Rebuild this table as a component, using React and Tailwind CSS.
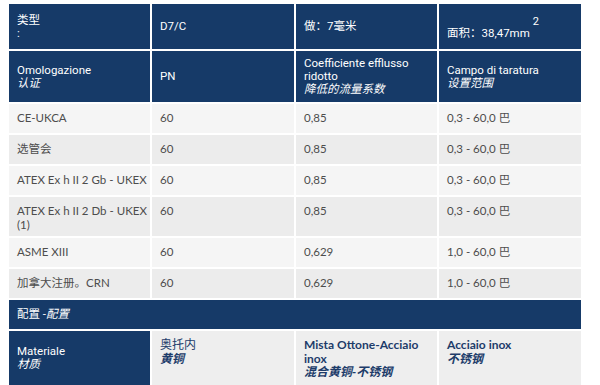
export default function App() {
  const dark = "bg-[#163a68] text-white font-['Roboto','Noto_Sans_CJK_SC',sans-serif] text-[11.5px] leading-[13px] px-[8px] flex flex-col justify-center";
  const dataFont = "font-['Lato','Noto_Sans_CJK_SC',sans-serif] text-[11.5px] leading-[14px] text-[#4d4d4d]";
  const rows = [
    { a: "CE-UKCA", b: "60", c: "0,85", d: "0,3 - 60,0 巴", h: "h-[29px]", bg: "bg-[#f5f5f5]" },
    { a: "选管会", b: "60", c: "0,85", d: "0,3 - 60,0 巴", h: "h-[29px]", bg: "bg-[#ececec]" },
    { a: "ATEX Ex h II 2 Gb - UKEX", b: "60", c: "0,85", d: "0,3 - 60,0 巴", h: "h-[29px]", bg: "bg-[#f5f5f5]" },
    { a: "ATEX Ex h II 2 Db - UKEX (1)", b: "60", c: "0,85", d: "0,3 - 60,0 巴", h: "h-[39px]", bg: "bg-[#ececec]" },
    { a: "ASME XIII", b: "60", c: "0,629", d: "1,0 - 60,0 巴", h: "h-[29px]", bg: "bg-[#f5f5f5]" },
    { a: "加拿大注册。CRN", b: "60", c: "0,629", d: "1,0 - 60,0 巴", h: "h-[29px]", bg: "bg-[#ececec]" },
  ];
  const mat = "bg-[#eeeeee] pl-[8px] pr-[4px] pt-[7px] font-['Lato','Noto_Sans_CJK_SC',sans-serif] text-[12px] leading-[13.5px] text-[#1d3c6a]";
  return (
    <div className="w-[600px] h-[385px] bg-white overflow-hidden pl-[9px] pt-[4px]">
      <div className="w-[572px] grid grid-cols-[141px_142px_141px_142px] gap-[2px]">
        <div className={`${dark} h-[45px]`}>
          <div>类型</div>
          <div>:</div>
        </div>
        <div className={`${dark} h-[45px]`}>D7/C</div>
        <div className={`${dark} h-[45px]`}>做：7毫米</div>
        <div className={`${dark} h-[45px]`}>
          <div className="pt-[3px]">
            面积：38,47mm<span className="align-[12px] text-[11px] leading-[11px] pl-[3px]">2</span>
          </div>
        </div>

        <div className={`${dark} h-[51px]`}>
          <div>Omologazione</div>
          <div className="italic">认证</div>
        </div>
        <div className={`${dark} h-[51px]`}>PN</div>
        <div className={`${dark} h-[51px]`}>
          <div>Coefficiente efflusso ridotto</div>
          <div className="italic">降低的流量系数</div>
        </div>
        <div className={`${dark} h-[51px]`}>
          <div>Campo di taratura</div>
          <div className="italic">设置范围</div>
        </div>

        {rows.map((r, i) => (
          <div key={i} className="contents">
            <div className={`${r.bg} ${r.h} ${dataFont} pl-[8px] pr-[2px] pt-[7px]`}>{r.a}</div>
            <div className={`${r.bg} ${r.h} ${dataFont} pl-[8px] pr-[2px] pt-[7px]`}>{r.b}</div>
            <div className={`${r.bg} ${r.h} ${dataFont} pl-[8px] pr-[2px] pt-[7px]`}>{r.c}</div>
            <div className={`${r.bg} ${r.h} ${dataFont} pl-[8px] pr-[2px] pt-[7px]`}>{r.d}</div>
          </div>
        ))}

        <div className={`${dark} col-span-4 h-[29px]`}>
          <div>
            配置 -<span className="italic">配置</span>
          </div>
        </div>

        <div className={`${dark} h-[54px]`}>
          <div>Materiale</div>
          <div className="italic">材质</div>
        </div>
        <div className={`${mat} h-[54px]`}>
          <div>奥托内</div>
          <div className="italic font-bold">黄铜</div>
        </div>
        <div className={`${mat} h-[54px] font-bold`}>
          <div>Mista Ottone-Acciaio inox</div>
          <div className="italic">混合黄铜-不锈钢</div>
        </div>
        <div className={`${mat} h-[54px] font-bold`}>
          <div>Acciaio inox</div>
          <div className="italic">不锈钢</div>
        </div>
      </div>
    </div>
  );
}
